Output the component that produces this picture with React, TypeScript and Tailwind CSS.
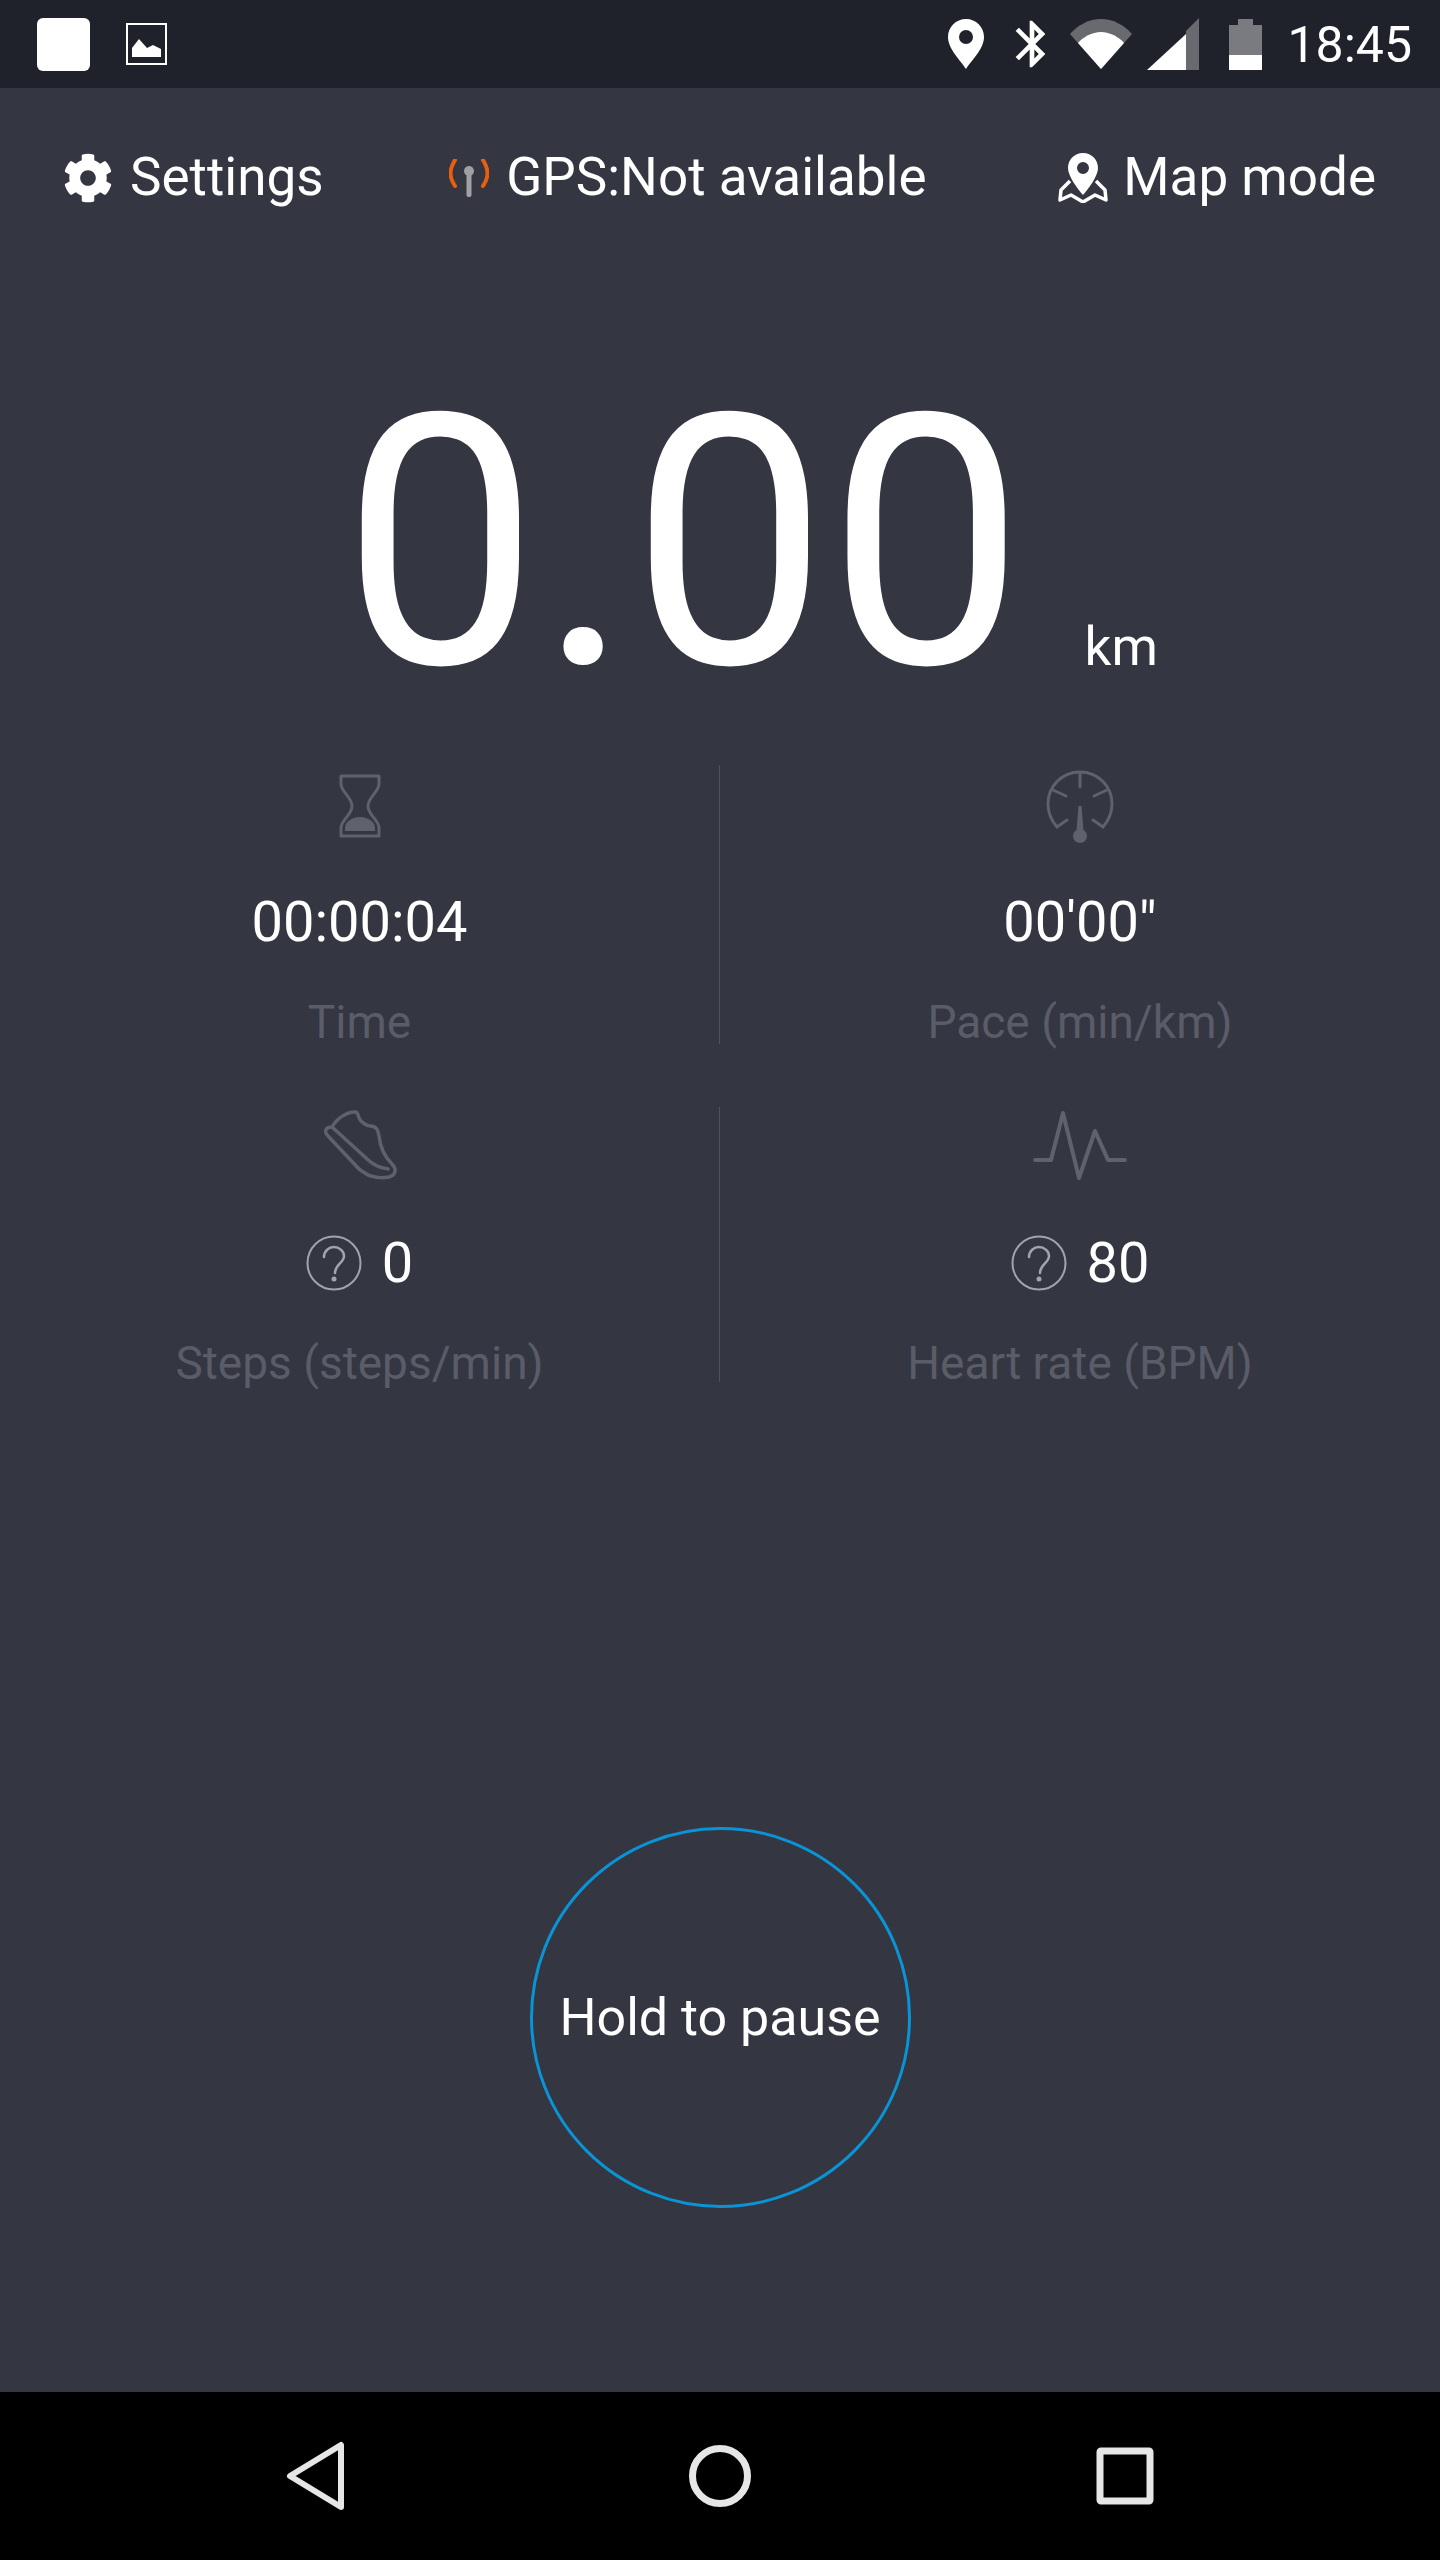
import React from "react";
import { FaCog } from "react-icons/fa";
import { MdBluetooth } from "react-icons/md";

function PinIcon() {
  return (
    <svg width="36" height="50" viewBox="0 0 36 50">
      <path
        fillRule="evenodd"
        fill="#fff"
        d="M18 0C8 0 0 8 0 18c0 12 13 24 18 32 5-8 18-20 18-32C36 8 28 0 18 0Zm0 11a7 7 0 1 1 0 14 7 7 0 0 1 0-14Z"
      />
    </svg>
  );
}

function WifiIcon() {
  return (
    <svg width="62" height="50" viewBox="0 0 62 50">
      <path fill="#686a70" d="M0 15C8 6 19 0 31 0s23 6 31 15L31 50Z" />
      <path fill="#fff" d="M8 24c5-6 14-11 23-11s18 5 23 11L31 50Z" />
    </svg>
  );
}

function SignalIcon() {
  return (
    <svg width="52" height="52" viewBox="0 0 52 52">
      <path fill="#686a70" d="M52 0v52H39V13Z" />
      <path fill="#fff" d="M39 16v36H0Z" />
    </svg>
  );
}

function BatteryIcon() {
  return (
    <svg width="33" height="51" viewBox="0 0 33 51">
      <path fill="#7a7b80" d="M9 0h15v6h9v31H0V6h9Z" />
      <rect y="36" width="33" height="15" fill="#fff" />
    </svg>
  );
}

function PictureIcon() {
  return (
    <svg width="41" height="42" viewBox="0 0 41 42">
      <rect x="1" y="1" width="39" height="40" fill="none" stroke="#fff" strokeWidth="2" />
      <path fill="#fff" d="M6 34V25l7-9 8 9 6-3 8 4v8Z" />
    </svg>
  );
}

function GpsIcon() {
  return (
    <svg width="40" height="38" viewBox="0 0 40 38">
      <path d="M6 1C0 11 0 18 6 27M34 1c6 10 6 17 0 26" fill="none" stroke="#e8600f" strokeWidth="4" strokeLinecap="round" />
      <circle cx="20" cy="12" r="5" fill="#a0a0a4" />
      <rect x="17.5" y="12" width="5" height="26" rx="2" fill="#a0a0a4" />
    </svg>
  );
}

function MapPinIcon() {
  return (
    <svg width="50" height="50" viewBox="0 0 50 50">
      <path
        fillRule="evenodd"
        fill="#fff"
        d="M25 0C16 0 10 7 10 15c0 8 9 20 15 27 6-7 15-19 15-27C40 7 34 0 25 0Zm0 9a6 6 0 1 1 0 12 6 6 0 0 1 0-12Z"
      />
      <path
        d="M12 28 3 37l-1 10 11-5 12 7 12-7 11 5-1-10-9-9"
        fill="none"
        stroke="#fff"
        strokeWidth="3.5"
        strokeLinejoin="round"
      />
    </svg>
  );
}

function HourglassIcon() {
  return (
    <svg width="44" height="64" viewBox="0 0 44 64" fill="none">
      <path
        d="M3 2h38v8c0 8-11 13-11 22s11 14 11 22v8H3v-8c0-8 11-13 11-22S3 18 3 10Z"
        stroke="#5f616c"
        strokeWidth="3"
        strokeLinejoin="round"
      />
      <path d="M7 57v-3c0-7 8-11 15-11s15 4 15 11v3Z" fill="#5f616c" />
    </svg>
  );
}

function GaugeIcon() {
  return (
    <svg width="68" height="73" viewBox="0 0 68 73" fill="none" stroke="#5f616c" strokeWidth="3" strokeLinecap="round">
      <path d="M21 50 11 57C5 50 2 42 2 34 2 16 16 2 34 2s32 14 32 32c0 8-3 16-9 23l-10-7" />
      <path d="M34 3v14M7 20l13 6M61 20l-13 6" />
      <path d="M32.500 36h3l2 24h-7Z" fill="#5f616c" stroke="none" />
      <circle cx="34" cy="66" r="7" fill="#5f616c" stroke="none" />
    </svg>
  );
}

function ShoeIcon() {
  return (
    <svg width="74" height="70" viewBox="0 0 74 70" fill="none" stroke="#5f616c" strokeWidth="3.5" strokeLinecap="round" strokeLinejoin="round">
      <path d="M9 17C14 8 24 2 32 2c3 0 3 3 4 6 2 4 7 8 12 8 6 1 7 4 8 10 1 10 5 20 13 28 5 5 4 11-3 13-5 1-12 1-18-1-4-1-8-4-12-7L5 26c-4-4-3-9 4-9Z" />
      <path d="M9 17 43 48c6 6 13 10 22 11" />
    </svg>
  );
}

function PulseIcon() {
  return (
    <svg width="94" height="70" viewBox="0 0 94 70" fill="none" stroke="#5f616c" strokeWidth="4" strokeLinecap="round" strokeLinejoin="round">
      <path d="M2 50h16L30 3l16 65 16-47 13 29h17" />
    </svg>
  );
}

function QuestionIcon() {
  return (
    <svg width="56" height="56" viewBox="0 0 56 56" fill="none">
      <circle cx="28" cy="28" r="26.500" stroke="#a3a4aa" strokeWidth="2" />
      <path
        d="M18 22c0-6 5-10 10-10s10 4 10 9c0 7-9 8-9 17"
        stroke="#a3a4aa"
        strokeWidth="2.500"
        strokeLinecap="round"
      />
      <circle cx="28" cy="44" r="2.500" fill="#a3a4aa" />
    </svg>
  );
}

function Metric({
  icon,
  value,
  label,
  divider,
  unknown,
}: {
  icon: React.ReactNode;
  value: string;
  label: string;
  divider?: boolean;
  unknown?: boolean;
}) {
  // The second row (unknown readings) sits a little tighter than the first.
  return (
    <div
      className={`flex flex-col items-center ${unknown ? "h-[275px]" : "h-[279px]"} ${
        divider ? "border-r border-[#50525d]" : ""
      }`}
    >
      <div className={`flex shrink-0 items-center justify-center ${unknown ? "h-[76px]" : "h-[82px]"}`}>{icon}</div>
      <div
        className={`flex h-[60px] shrink-0 items-center gap-5 text-[56px] leading-[60px] text-white ${
          unknown ? "mt-[50px]" : "mt-[45px]"
        }`}
      >
        {unknown && <QuestionIcon />}
        <span>{value}</span>
      </div>
      <div className="mt-[49px] shrink-0 text-[46px] leading-[42px] text-[#5a5c67]">{label}</div>
    </div>
  );
}

export default function App() {
  return (
    <div className="flex h-[2560px] flex-col bg-[#343642] font-['Roboto',sans-serif]">
      {/* status bar */}
      <div className="flex h-[88px] shrink-0 items-center bg-[#1f222b] pl-[37px] pr-[28px]">
        <div className="h-[53px] w-[53px] rounded-md bg-white" />
        <div className="ml-9">
          <PictureIcon />
        </div>
        <div className="ml-auto flex items-center">
          <PinIcon />
          <MdBluetooth className="ml-5 text-white" size={56} />
          <div className="ml-[10px]">
            <WifiIcon />
          </div>
          <div className="ml-[15px]">
            <SignalIcon />
          </div>
          <div className="ml-[30px]">
            <BatteryIcon />
          </div>
          <span className="ml-[25px] mt-[2px] text-[50px] leading-none text-white">18:45</span>
        </div>
      </div>

      <main className="flex-1">
        {/* top actions */}
        <div className="flex h-[180px] items-center justify-between pl-[63px] pr-[64px] text-[53px] text-white">
          <div className="flex items-center gap-[17px]">
            <FaCog size={50} />
            <span>Settings</span>
          </div>
          <div className="mr-[6px] flex items-center gap-[17px]">
            <GpsIcon />
            <span>GPS:Not available</span>
          </div>
          <div className="flex items-center gap-[15px]">
            <MapPinIcon />
            <span>Map mode</span>
          </div>
        </div>

        {/* distance */}
        <div className="flex h-[497px] items-end justify-center pb-[47px] pl-[60px]">
          <span className="text-[350px] leading-[350px] text-white">0.00</span>
          <span className="mb-[41px] ml-[60px] text-[53px] leading-[60px] text-white">km</span>
        </div>

        {/* metrics */}
        <div className="grid grid-cols-2 gap-y-[63px]">
          <Metric icon={<HourglassIcon />} value="00:00:04" label="Time" divider />
          <Metric icon={<GaugeIcon />} value={"00'00\""} label="Pace (min/km)" />
          <Metric icon={<ShoeIcon />} value="0" label="Steps (steps/min)" divider unknown />
          <Metric icon={<PulseIcon />} value="80" label="Heart rate (BPM)" unknown />
        </div>

        {/* hold button */}
        <div className="mt-[445px] flex justify-center">
          <div className="flex h-[381px] w-[381px] items-center justify-center rounded-full border-[3px] border-[#0a94d6] text-[52px] text-white">
            Hold to pause
          </div>
        </div>
      </main>

      {/* navigation bar */}
      <div className="flex h-[168px] shrink-0 items-center justify-center gap-[325px] bg-black">
        <svg width="80" height="80" viewBox="0 0 80 80" fill="none" stroke="#e6e6e6" strokeWidth="6" strokeLinejoin="round">
          <path d="M66 9v62L15 40Z" />
        </svg>
        <svg width="80" height="80" viewBox="0 0 80 80" fill="none" stroke="#e6e6e6" strokeWidth="7">
          <circle cx="40" cy="40" r="27.500" />
        </svg>
        <svg width="80" height="80" viewBox="0 0 80 80" fill="none" stroke="#e6e6e6" strokeWidth="7" strokeLinejoin="round">
          <rect x="15" y="15" width="50" height="50" rx="1" />
        </svg>
      </div>
    </div>
  );
}
